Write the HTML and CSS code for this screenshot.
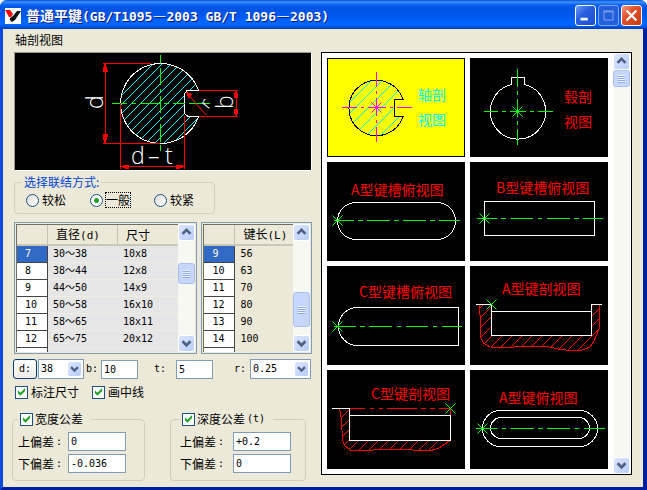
FILE: index.html
```html
<!DOCTYPE html>
<html lang="zh-CN">
<head>
<meta charset="utf-8">
<title>普通平键(GB/T1095—2003 GB/T 1096—2003)</title>
<link rel="stylesheet" href="styles.css">
</head>
<body>
<svg class="defs" aria-hidden="true">
  <defs>
    <clipPath id="shaftClip"><path d="M183.500 37.500A40 40 0 1 0 183.500 63.500H173L169.500 60.500V40.500L172 37.500Z"/></clipPath>
    <clipPath id="tileClip"><path d="M76 41.500A27.700 27.700 0 1 0 76 58.500H67V41.500Z"/></clipPath>
    <clipPath id="keyAClip"><path d="M9 38.500L10.500 54V71L13.500 77 20 81 42 81.500 48 80H75L88 83 100 84.500H111L120 81 124 75 129 63 130 38.500H121.500V69.500H21.500V38.500Z"/></clipPath>
    <clipPath id="keyCClip"><path d="M12.500 38.500L14.500 50 15.500 70 18 76 24 80.500H44L48 79.500H84L88 80.500H104L112 78 123.500 70.500H22.500V38.500Z"/></clipPath>
    <path id="hatchRed" fill="none" stroke="#f00" shape-rendering="auto" d="M0 52L52 0M0 62L62 0M0 72L72 0M0 82L82 0M0 92L92 0M0 102L102 0M12 100L112 0M22 100L122 0M32 100L132 0M42 100L142 0M52 100L152 0M62 100L162 0M72 100L172 0M82 100L182 0M92 100L192 0M102 100L202 0M112 100L212 0"/>
    <g id="star" fill="none" shape-rendering="auto"><path d="M-5 -5L5 5M-5 5L5 -5"/></g>
    <g id="up"><path d="M4 10l4.500-4.500 4.500 4.500" fill="none" stroke="#4d6185" stroke-width="3"/></g>
    <g id="down"><path d="M4 6l4.500 4.500 4.500-4.500" fill="none" stroke="#4d6185" stroke-width="3"/></g>
  </defs>
</svg>
<div class="window">
  <header class="titlebar">
    <svg class="logo" viewBox="0 0 16 16"><rect width="16" height="16" fill="#fff"/><path d="M0 2h5l3 4-2 3H4z" fill="#f00"/><path d="M5 10l3-2 4-5h4l-6 9-3 2-2-2z" fill="#111"/></svg>
    <h1>普通平键<span class="latin">(GB/T1095</span>—<span class="latin">2003 GB/T 1096</span>—<span class="latin">2003)</span></h1>
    <div class="caption">
      <button type="button" aria-label="最小化"><svg viewBox="0 0 21 21"><path d="M5 13h8v3H5z" fill="#fff"/></svg></button>
      <button type="button" aria-label="最大化" class="dim" disabled><svg viewBox="0 0 21 21"><path d="M5.500 5.500h10v10h-10zM5 6.500h11" fill="none" stroke="#8fabec"/></svg></button>
      <button type="button" aria-label="关闭" class="close"><svg viewBox="0 0 21 21"><path d="M5 5l11 11M16 5l-11 11" stroke="#fff" stroke-width="2.400"/></svg></button>
    </div>
  </header>
  <main class="body">
    <h2 class="heading">轴剖视图</h2>
    <section class="left">
      <div class="preview">
        <svg viewBox="0 0 296 117">
          <g fill="none" shape-rendering="crispEdges">
            <path clip-path="url(#shaftClip)" shape-rendering="auto" stroke="#0ff" d="M49 100L149 0M58 100L158 0M67 100L167 0M76 100L176 0M85 100L185 0M94 100L194 0M103 100L203 0M112 100L212 0M121 100L221 0M130 100L230 0M139 100L239 0M148 100L248 0"/>
            <path d="M183.500 37.500A40 40 0 1 0 183.500 63.500H173L169.500 60.500V40.500L172 37.500Z" stroke="#fff"/>
            <path d="M145.500 2V98" stroke="#0f0" stroke-dasharray="8 5 17 4 3 4 17 4 3 4 18 3 6"/>
            <path d="M97 50.500H195" stroke="#0f0" stroke-dasharray="15 4 5 4 20 4 5 4 12 4 21"/>
            <g stroke="#f00">
              <path d="M88 10.500H136M88 90.500H145M90.500 10V91M105.500 50V116M169.500 63V116M105 113.500H170M184 37.500H223M184 63.500H223M221.500 37V64"/>
              <path d="M171 39L191 62" shape-rendering="auto"/>
            </g>
            <path d="M90 10l2.500 7v2h-5v-2zM90 91l2.500-7v-3h-5v3zM105 113.500l5-2h4v4h-4zM170 113.500l-5-2h-4v4h4zM221 38l2 3v4h-4v-4zM221 63l2-3v-4h-4v4zM171 39l6 2-3 5z" fill="#f00"/>
          </g>
          <g class="cad big">
            <text transform="translate(88 56) rotate(-90)">d</text>
            <text transform="translate(218 56) rotate(-90)">b</text>
            <text class="small" transform="translate(193 57) rotate(-50)">r</text>
            <text x="116 133 150" y="111">d–t</text>
          </g>
        </svg>
      </div>
      <fieldset class="join">
        <legend>选择联结方式:</legend>
        <label><input type="radio" name="join">较松</label>
        <label><input type="radio" name="join" checked><span class="focus">一般</span></label>
        <label><input type="radio" name="join">较紧</label>
      </fieldset>
      <div class="lists">
        <div class="list shade">
          <div class="rows">
            <table>
              <thead><tr><th></th><th>直径<span class="latin">(d)</span></th><th>尺寸</th></tr></thead>
              <tbody>
                <tr class="on"><th>7</th><td>30～38</td><td>10x8</td></tr>
                <tr><th>8</th><td>38～44</td><td>12x8</td></tr>
                <tr><th>9</th><td>44～50</td><td>14x9</td></tr>
                <tr><th>10</th><td>50～58</td><td>16x10</td></tr>
                <tr><th>11</th><td>58～65</td><td>18x11</td></tr>
                <tr><th>12</th><td>65～75</td><td>20x12</td></tr>
                <tr><th></th><td></td><td></td></tr>
              </tbody>
            </table>
          </div>
          <div class="scroll diameter">
            <button type="button" aria-label="向上"><svg viewBox="0 0 17 17"><use href="#up"/></svg></button>
            <div class="track"><div class="thumb"><i></i></div></div>
            <button type="button" aria-label="向下"><svg viewBox="0 0 17 17"><use href="#down"/></svg></button>
          </div>
        </div>
        <div class="list">
          <div class="rows">
            <table>
              <thead><tr><th></th><th>键长<span class="latin">(L)</span></th></tr></thead>
              <tbody>
                <tr class="on"><th>9</th><td>56</td></tr>
                <tr><th>10</th><td>63</td></tr>
                <tr><th>11</th><td>70</td></tr>
                <tr><th>12</th><td>80</td></tr>
                <tr><th>13</th><td>90</td></tr>
                <tr><th>14</th><td>100</td></tr>
                <tr><th></th><td></td></tr>
              </tbody>
            </table>
          </div>
          <div class="scroll length">
            <button type="button" aria-label="向上"><svg viewBox="0 0 17 17"><use href="#up"/></svg></button>
            <div class="track"><div class="thumb"><i></i></div></div>
            <button type="button" aria-label="向下"><svg viewBox="0 0 17 17"><use href="#down"/></svg></button>
          </div>
        </div>
      </div>
      <div class="params">
        <button type="button" class="push">d:</button>
        <span class="combo d"><select aria-label="d"><option>38</option></select><svg viewBox="0 0 17 17"><use href="#down"/></svg></span>
        <label class="b" for="b">b:</label><input type="text" id="b" value="10">
        <label class="t" for="t">t:</label><input type="text" id="t" value="5">
        <label class="r" for="r">r:</label><span class="combo radius"><select id="r"><option>0.25</option></select><svg viewBox="0 0 17 17"><use href="#down"/></svg></span>
      </div>
      <div class="checks">
        <label><input type="checkbox" checked>标注尺寸</label>
        <label><input type="checkbox" checked>画中线</label>
      </div>
      <div class="groups">
        <fieldset class="tol width">
          <legend><label><input type="checkbox" checked>宽度公差</label></legend>
          <label for="wu">上偏差<span class="latin">:</span></label><input type="text" id="wu" value="0">
          <label for="wl">下偏差<span class="latin">:</span></label><input type="text" id="wl" value="-0.036">
        </fieldset>
        <fieldset class="tol depth">
          <legend><label><input type="checkbox" checked>深度公差<span class="latin">(t)</span></label></legend>
          <label for="du">上偏差<span class="latin">:</span></label><input type="text" id="du" value="+0.2">
          <label for="dl">下偏差<span class="latin">:</span></label><input type="text" id="dl" value="0">
        </fieldset>
      </div>
    </section>
    <section class="panel">
      <div class="gallery">
        <button type="button" class="tile selected">
          <svg viewBox="0 0 138 99"><g fill="none" shape-rendering="crispEdges">
            <path clip-path="url(#tileClip)" shape-rendering="auto" stroke="#0ff" d="M0 67L67 0M0 78L78 0M0 91L91 0M4 100L104 0M17 100L117 0M31 100L131 0"/>
            <path d="M76 41.500A27.700 27.700 0 1 0 76 58.500H67V41.500Z" stroke="#000"/>
            <g stroke="#f0f"><path d="M15 49.500H85M49.500 14V84" stroke-dasharray="15 4 3 4 18 4 3 4 15"/><use href="#star" x="49.500" y="49.500"/></g></g>
            <g class="cad cyan"><text x="91" y="42">轴剖</text><text x="91" y="67">视图</text></g></svg>
        </button>
        <button type="button" class="tile">
          <svg viewBox="0 0 138 99"><g fill="none" shape-rendering="crispEdges">
            <path d="M41.500 26.500A27.700 27.700 0 1 0 54.500 26.500V19.500H41.500Z" stroke="#fff"/>
            <g stroke="#0f0"><path d="M14 53.500H83" stroke-dasharray="14 4 4 4 16 4 4 4 15"/><path d="M47.500 11V87" stroke-dasharray="18 4 4 4 18 4 4 4 18"/><use href="#star" x="47.500" y="53.500"/></g></g>
            <g class="cad"><text x="94" y="44">毂剖</text><text x="94" y="69">视图</text></g></svg>
        </button>
        <button type="button" class="tile">
          <svg viewBox="0 0 138 99"><g fill="none" shape-rendering="crispEdges">
            <rect x="10.500" y="40.500" width="118" height="37" rx="18.500" stroke="#fff"/>
            <g stroke="#0f0"><path d="M7 58.500H133" stroke-dasharray="20 4 5 4 23 4 5 4 23 4 5 4 21"/><use href="#star" x="10.500" y="58.500"/></g></g>
            <g class="cad"><text x="24" y="33">A型键槽俯视图</text></g></svg>
        </button>
        <button type="button" class="tile">
          <svg viewBox="0 0 138 99"><g fill="none" shape-rendering="crispEdges">
            <rect x="14.500" y="39.500" width="110" height="34" stroke="#fff"/>
            <g stroke="#0f0"><path d="M7 56.500H133" stroke-dasharray="20 4 5 5 22 5 4 5 23 4 5 4 20"/><use href="#star" x="14.500" y="56.500"/></g></g>
            <g class="cad"><text x="26" y="31">B型键槽俯视图</text></g></svg>
        </button>
        <button type="button" class="tile">
          <svg viewBox="0 0 138 99"><g fill="none" shape-rendering="crispEdges">
            <path d="M131.500 41.500H30.500A19 19 0 0 0 30.500 79.500H131.500Z" stroke="#fff"/>
            <g stroke="#0f0"><path d="M7 60.500H135" stroke-dasharray="22 4 5 4 23 5 4 5 22 5 4 5 20"/><use href="#star" x="10.500" y="60.500"/></g></g>
            <g class="cad"><text x="32" y="31">C型键槽俯视图</text></g></svg>
        </button>
        <button type="button" class="tile">
          <svg viewBox="0 0 138 99"><g fill="none" shape-rendering="crispEdges">
            <g clip-path="url(#keyAClip)"><use href="#hatchRed"/></g>
            <path d="M9 38.500L10.500 54V71L13.500 77 20 81 42 81.500 48 80H75L88 83 100 84.500H111L120 81 124 75 129 63 130 38.500" stroke="#f00"/>
            <path d="M6 38.500H21.500V69.500H121.500V38.500H132M21.500 45.500H121.500" stroke="#fff"/>
            <use href="#star" x="21.500" y="38.500" stroke="#0f0"/></g>
            <g class="cad"><text x="32" y="28">A型键剖视图</text></g></svg>
        </button>
        <button type="button" class="tile">
          <svg viewBox="0 0 138 99"><g fill="none" shape-rendering="crispEdges">
            <g clip-path="url(#keyCClip)"><use href="#hatchRed"/></g>
            <path d="M12.500 38.500L14.500 50 15.500 70 18 76 24 80.500H44L48 79.500H84L88 80.500H104L112 78 123.500 70.500" stroke="#f00"/>
            <path d="M22 38.500H123.500V46" stroke="#f00" stroke-dasharray="16 5 4 5 4 4 30 4 5 4 5 4 25"/>
            <path d="M5 38.500H22.500V70.500H123.500V45.500H22.500" stroke="#fff"/>
            <use href="#star" x="123.500" y="38.500" stroke="#0f0"/></g>
            <g class="cad"><text x="44" y="29">C型键剖视图</text></g></svg>
        </button>
        <button type="button" class="tile">
          <svg viewBox="0 0 138 99"><g fill="none" shape-rendering="crispEdges">
            <rect x="12.500" y="40.500" width="115" height="36" rx="18" stroke="#fff"/><rect x="20.500" y="47.500" width="99" height="21" rx="10.500" stroke="#fff"/>
            <g stroke="#0f0"><path d="M6 58.500H135" stroke-dasharray="21 5 4 5 23 4 5 4 23 5 4 5 21"/><use href="#star" x="12.500" y="58.500"/></g></g>
            <g class="cad"><text x="29" y="33">A型键俯视图</text></g></svg>
        </button>
      </div>
      <div class="scroll views">
        <button type="button" aria-label="向上"><svg viewBox="0 0 17 17"><use href="#up"/></svg></button>
        <div class="track"><div class="thumb"><i></i></div></div>
        <button type="button" aria-label="向下"><svg viewBox="0 0 17 17"><use href="#down"/></svg></button>
      </div>
    </section>
  </main>
</div>
</body>
</html>
```
FILE: styles.css
```css
* { box-sizing: border-box; }
body {
  margin: 0;
  background: #fff;
  color: #000;
  font: 12px/14px "Noto Sans CJK SC", sans-serif;
}
h1, h2 { margin: 0; font-size: inherit; font-weight: normal; }
button, input, select { margin: 0; padding: 0; border: 0; font: inherit; color: inherit; }
svg { display: block; }
.defs { position: absolute; width: 0; height: 0; }
.latin { font-family: "DejaVu Sans Mono", monospace; font-size: 10px; }

.window {
  display: flex;
  flex-direction: column;
  min-height: 100vh;
  border: solid;
  border-width: 0 4px 3px 3px;
  border-color: #0a3fe0 #001ea0 #001ea0 #0a48e0;
  border-radius: 7px 7px 0 0;
  background: #ece9d8;
}
.titlebar {
  display: flex;
  align-items: center;
  gap: 5px;
  height: 29px;
  margin: 0 -4px 0 -3px;
  padding: 2px 5px 0;
  border-radius: 7px 7px 0 0;
  background: linear-gradient(#0a4bd8 0, #3a93ff 2px, #0a5fee 5px, #0054e3 9px, #0058ee 16px, #0066ff 22px, #0066ff 25px, #0047c8 28px, #003cb8 29px);
  color: #fff;
}
.logo { width: 16px; height: 16px; }
.titlebar h1 {
  flex: 1;
  font-size: 14px;
  line-height: 18px;
  font-weight: bold;
  white-space: nowrap;
  text-shadow: 1px 1px #0a1883;
}
.titlebar .latin { font-size: 13px; }
.caption { display: flex; gap: 2px; }
.caption button {
  width: 21px;
  height: 21px;
  border: 1px solid #fff;
  border-radius: 3px;
  background: linear-gradient(135deg, #6f9cf5, #2b5fe0 40%, #1e50d2);
}
.caption svg { width: 19px; height: 19px; }
.caption .dim { border-color: #7da3f0; background: #2260dc; }
.caption .close { background: linear-gradient(135deg, #f09a7c, #e2502c 40%, #c83a12); }

.body {
  flex: 1;
  display: grid;
  grid-template-columns: 300px minmax(0, 1fr);
  grid-template-rows: 19px auto;
  column-gap: 9px;
  align-items: start;
  padding: 4px 11px 6px 9px;
}
.heading { grid-column: 1 / -1; padding-left: 3px; }
.preview {
  margin-left: 2px;
  border: 1px solid;
  border-color: #9d9b8e #fff #fff #9d9b8e;
  background: #000;
}
.cad { font: 400 14px "Noto Sans CJK SC", sans-serif; fill: #f00; }
.cad.cyan { fill: #0ff; }
.cad.big { font: 300 23px "Open Sans", sans-serif; fill: #fff; }
.cad .small { font-size: 18px; }

fieldset { min-width: 0; margin: 0; border: 1px solid #d0d0bf; border-radius: 4px; }
legend { padding: 0 2px; }
.join { display: flex; width: 201px; margin: 4px 0 8px 2px; padding: 4px 0 6px 11px; }
.join legend { margin-left: -4px; color: #0046d5; }
.join label { flex: none; width: 64px; white-space: nowrap; }
label { display: flex; align-items: center; gap: 3px; }
.focus { outline: 1px dotted #000; }
input[type="radio"], input[type="checkbox"] {
  appearance: none;
  flex: none;
  width: 13px;
  height: 13px;
  border: 1px solid #1c5180;
  background: #fff;
}
input[type="radio"] { border-radius: 50%; background: linear-gradient(135deg, #dcdcd7, #fff); }
input[type="radio"]:checked { background: radial-gradient(circle, #21a121 0 2px, #fff 3px); }
input[type="checkbox"]:checked::before {
  content: "";
  display: block;
  width: 9px;
  height: 9px;
  margin: 1px;
  background: #21a121;
  clip-path: polygon(10% 30%, 38% 58%, 90% 5%, 90% 40%, 38% 92%, 10% 65%);
}

.lists { display: grid; grid-template-columns: 184fr 111fr; gap: 4px; margin-left: 2px; }
.list {
  display: flex;
  height: 132px;
  padding: 1px;
  border: 1px solid #7f9db9;
  background: #ece9d8;
}
.rows { flex: 1; overflow: hidden; border: solid #716f64; border-width: 1px 0 0 1px; }
table { width: 100%; table-layout: fixed; border-collapse: separate; border-spacing: 0; }
th, td { padding: 0; font-weight: normal; text-align: left; white-space: nowrap; }
thead th { height: 21px; padding-left: 8px; border-right: 1px solid #c7c5b2; border-bottom: 2px solid #cbc7b8; }
thead .latin { font-size: 11px; }
thead th:last-child { border-right: 0; }
thead th:first-child { width: 31px; }
.shade thead th:nth-child(2) { width: 70px; }
tbody { font: 10px/14px "DejaVu Sans Mono", "Noto Sans CJK SC", monospace; }
tbody th {
  height: 17px;
  padding-left: 8px;
  border: solid #444;
  border-width: 0 1px 1px 0;
  background: #fff;
}
tbody td { padding-left: 5px; border-bottom: 1px solid transparent; }
.shade td { border-color: #efede2; background: #e6e6e6; }
.on th { background: #316ac5; color: #fff; }

.scroll { display: flex; flex: none; flex-direction: column; width: 17px; background: #f8f8f3; }
.scroll button, .combo svg {
  flex: none;
  height: 17px;
  border: 1px solid #fff;
  border-radius: 3px;
  background: linear-gradient(135deg, #dbe6fe, #b9cdfa);
}
.scroll button svg { width: 15px; height: 15px; }
.track { flex: 1; }
.thumb {
  display: flex;
  align-items: center;
  justify-content: center;
  height: 21px;
  border: 1px solid #a9c0ee;
  border-radius: 3px;
  background: #c6d6fd;
}
.thumb i { width: 7px; height: 8px; background: repeating-linear-gradient(#f2f6ff 0 1px, #8ba9ea 1px 2px); }
.diameter .thumb { margin-top: 22px; }
.length .thumb { height: 35px; margin-top: 51px; }
.views { margin-right: 1px; }
.views .thumb { height: 17px; }

.params { display: flex; align-items: center; margin: 5px 0 6px 1px; font: 10px/14px "DejaVu Sans Mono", monospace; }
.push {
  width: 24px;
  height: 20px;
  margin-right: 1px;
  border: 1px solid #003c74;
  border-radius: 3px;
  background: linear-gradient(#fff, #ecebe6);
}
input[type="text"], select {
  height: 19px;
  padding: 0 2px;
  border: 1px solid #7f9db9;
  border-radius: 0;
  background: #fff;
  font: 10px/14px "DejaVu Sans Mono", monospace;
}
.params input { width: 37px; }
.combo { position: relative; }
.combo select { display: block; appearance: none; width: 100%; height: 20px; }
.combo svg { position: absolute; top: 2px; right: 2px; width: 15px; height: 16px; }
.combo.d { width: 46px; }
.combo.radius { width: 61px; }
.params .b { width: 17px; padding-left: 2px; }
.params .t { width: 38px; padding-left: 16px; }
.params .r { width: 37px; padding-left: 21px; }
.checks { display: flex; gap: 13px; margin-left: 3px; }
.groups { display: flex; gap: 25px; margin-top: 13px; }
.tol {
  display: grid;
  grid-template-columns: 50px 58px;
  row-gap: 3px;
  padding: 6px 5px 7px;
}
.tol legend { padding-right: 8px; }
.width { width: 133px; }
.depth { width: 136px; grid-template-columns: 53px 58px; padding-left: 9px; }
.tol label { gap: 2px; }

.panel { display: flex; border: 1px solid #000; background: #fff; }
.gallery { flex: 1; display: grid; grid-template-columns: 1fr 1fr; gap: 5px; padding: 5px; }
.tile { display: block; min-width: 0; background: #000; }
.tile svg { width: 100%; }
.tile.selected { background: #ff0; outline: 1px solid #000; outline-offset: -1px; }
```
